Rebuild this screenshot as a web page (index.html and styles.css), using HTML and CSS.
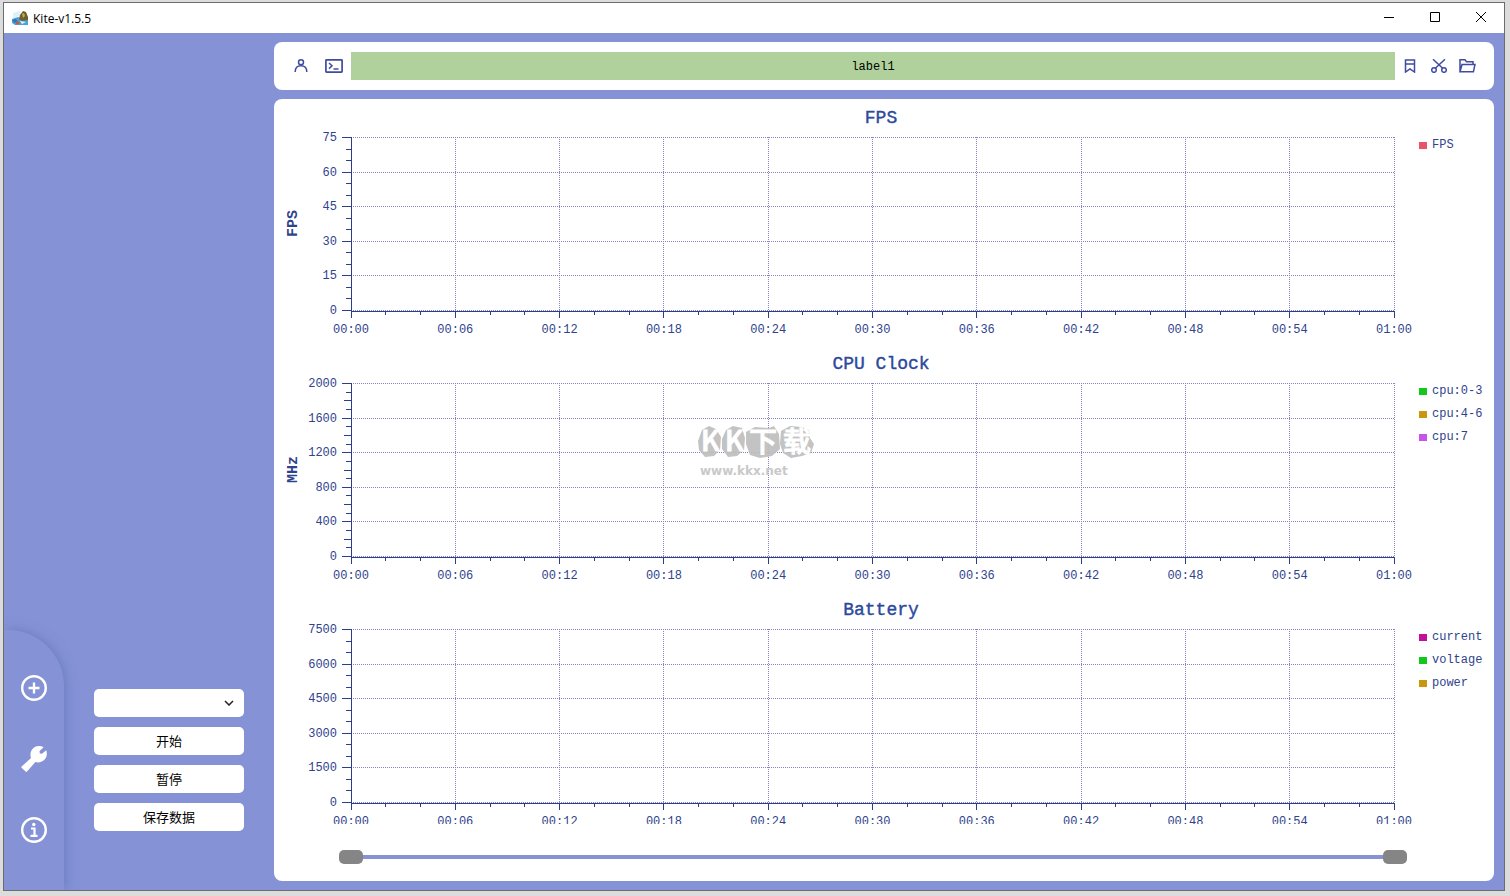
FILE: index.html
```html
<!DOCTYPE html>
<html lang="zh-CN">
<head>
<meta charset="utf-8">
<title>Kite-v1.5.5</title>
<link rel="stylesheet" href="styles.css">
</head>
<body>
<div class="window">
  <header class="titlebar">
    <svg class="app-icon" width="17" height="16" viewBox="0 0 17 16" aria-hidden="true">
      <path d="M1 3l7-2 1 4-6 3H1z" fill="#dff1f8"/>
      <path d="M0 9l6-2 5 2 5-1v7H3l-3-2z" fill="#4aa3d8"/>
      <path d="M7 9l1-4 3-4 3 1 2 5v3l-6 1z" fill="#6d6030"/>
      <path d="M10 4l2-1 1 3-2 2z" fill="#c9a64a"/>
      <path d="M0 10l4-1 2 3-3 1z" fill="#2677b8"/>
      <path d="M3 12l3-1 2 2-3 2z" fill="#c8584a"/>
      <path d="M8 11l6 1-4 2z" fill="#e8f6fb"/>
    </svg>
    <h1 class="app-title">Kite-v1.5.5</h1>
    <div class="window-buttons">
      <button class="window-button" type="button" aria-label="Minimize"><svg width="12" height="12" viewBox="0 0 12 12"><path d="M1 5.500h10"/></svg></button>
      <button class="window-button" type="button" aria-label="Maximize"><svg width="12" height="12" viewBox="0 0 12 12"><path d="M1.500 .5h9v9h-9z"/></svg></button>
      <button class="window-button" type="button" aria-label="Close"><svg width="12" height="12" viewBox="0 0 12 12"><path d="M1 0l10 10M11 0L1 10"/></svg></button>
    </div>
  </header>

  <div class="workspace">
    <aside class="side">
      <nav class="rail">
        <button class="rail-button" type="button" aria-label="Add">
          <svg width="26" height="26" viewBox="0 0 26 26" fill="none" stroke="#fff" stroke-width="2.400"><circle cx="13" cy="13" r="11.800"/><path d="M13 7.500v11M7.500 13h11"/></svg>
        </button>
        <button class="rail-button" type="button" aria-label="Tools">
          <svg width="26" height="26" viewBox="0 0 26 26"><path d="M4.600 25.600L.6 21.800q-.6-.6 0-1.200L10 12C8.600 8 9.800 3.600 13.400 1.300c2.600-1.600 6.400-1.600 9.200-.1L18.600 5l.2 2.600 2.200.2L25.200 4.200c1.200 3.200.7 6.800-1.600 9.400-2.200 2.600-6 3.400-9.200 2.400L6 25.600q-.7.6-1.400 0z" fill="#fff"/></svg>
        </button>
        <button class="rail-button" type="button" aria-label="About">
          <svg width="26" height="26" viewBox="0 0 26 26" fill="none" stroke="#fff"><circle cx="13" cy="13" r="11.800" stroke-width="2.400"/><circle cx="12.800" cy="7.500" r="1.700" fill="#fff" stroke="none"/><path d="M10 11.500h3.500V18M9.500 18.800h7" stroke-width="2.200"/></svg>
        </button>
      </nav>
      <div class="controls">
        <div class="picker">
          <select class="control" aria-label="Device"><option></option></select>
          <svg class="picker-arrow" width="10" height="6" viewBox="0 0 10 6"><path d="M1 1l4 4 4-4" fill="none" stroke="#222" stroke-width="1.500"/></svg>
        </div>
        <button class="control" type="button">开始</button>
        <button class="control" type="button">暂停</button>
        <button class="control" type="button">保存数据</button>
      </div>
    </aside>

    <main class="content">
      <section class="card toolbar">
        <div class="tools tools-left">
          <button class="tool" type="button" aria-label="User"><svg width="14" height="14" viewBox="0 0 14 14"><circle cx="7" cy="3.300" r="2.500"/><path d="M1.200 13c0-3.900 2.400-6.200 5.800-6.200s5.800 2.300 5.800 6.200"/></svg></button>
          <button class="tool" type="button" aria-label="Terminal"><svg width="18" height="14" viewBox="0 0 18 14"><rect x=".9" y=".9" width="16.200" height="12.200" rx=".6" stroke-width="1.700"/><path d="M4 4l3 2.800L4 9.600M8.500 10h5"/></svg></button>
        </div>
        <output class="status">label1</output>
        <div class="tools tools-right">
          <button class="tool" type="button" aria-label="Bookmark"><svg width="12" height="14" viewBox="0 0 12 14"><path d="M1.500 1h9v12L6 9.800 1.500 13zM1.500 5h9"/></svg></button>
          <button class="tool" type="button" aria-label="Cut"><svg width="16" height="14" viewBox="0 0 16 14"><path d="M2 .3l9.700 9M14 .3l-9.700 9"/><circle cx="3" cy="11" r="2.300"/><circle cx="13" cy="11" r="2.300"/></svg></button>
          <button class="tool" type="button" aria-label="Open folder"><svg width="17" height="14" viewBox="0 0 17 14"><path d="M1 12.800V.8h5l1.500 2H14v2.700M1 12.800l2-7.300h13l-1.600 7.300z"/></svg></button>
        </div>
      </section>

      <section class="card board">
        <div class="charts" id="charts"></div>
        <div class="range">
          <input class="range-input" type="range" aria-label="Range start" min="0" max="60" value="0">
          <input class="range-input range-end" type="range" aria-label="Range end" min="0" max="60" value="60">
        </div>
      </section>
    </main>
  </div>

  <div class="watermark">
    <svg width="118" height="34" viewBox="0 0 118 34">
      <path d="M1 16L5 5l7-4 7 3 5 8-1 13-6 6-9 1-6-7zM25 14l4-9 7-4 9 2 3 10-1 12-7 6-9 1-6-8zM49 7l9-5 14 1 5-2 5 8 1 15-8 7-12 2-10-3-4-11zM84 6l9-5 12 1 7 3 1 8 4 6-3 9-9 3-11 2-8-5-3-9z" fill="#bdbdbd"/>
      <g class="watermark-logo"><text x="4" y="26">K</text><text x="28" y="26">K</text><text x="52" y="27">下</text><text x="86" y="27">载</text></g>
    </svg>
    <span class="watermark-url">www.kkx.net</span>
  </div>
</div>
<script src="charts.js"></script>
</body>
</html>
```

FILE: styles.css
```css
* {
  box-sizing: border-box;
}

body {
  margin: 0;
  padding: 2px 5px 5px 3px;
  min-height: 100vh;
  display: flex;
  background: #dcdcdc;
  font-family: "Liberation Mono", "Noto Sans CJK SC", monospace;
  font-size: 12px;
}

button {
  border: 0;
  padding: 0;
  background: none;
  font: inherit;
  color: inherit;
}

svg {
  display: block;
}

.window {
  position: relative;
  flex: 1;
  display: flex;
  flex-direction: column;
  border: 1px solid #6c6c70;
  background: #8592d6;
}

.titlebar {
  display: flex;
  align-items: center;
  height: 30px;
  padding-left: 8px;
  background: #fff;
}

.app-title {
  flex: 1;
  margin: 0 0 0 4px;
  font: 400 12px "Open Sans", sans-serif;
  color: #000;
}

.window-buttons {
  display: flex;
  align-self: stretch;
}

.window-button {
  display: grid;
  place-items: center;
  width: 46px;
  fill: none;
  stroke: #000;
}

.workspace {
  flex: 1;
  display: grid;
  grid-template-columns: 270px 1fr;
}

.side {
  display: flex;
  align-items: flex-end;
  gap: 30px;
  overflow: hidden;
}

.rail {
  display: flex;
  flex-direction: column;
  align-items: center;
  gap: 45px;
  width: 60px;
  padding: 45px 0 47px;
  border-top-right-radius: 56px;
  background: #8592d6;
  box-shadow: 2px 0 12px #6c7dc0;
}

.controls {
  display: flex;
  flex-direction: column;
  gap: 10px;
  width: 150px;
  padding-bottom: 59px;
}

.control {
  width: 100%;
  height: 28px;
  padding-bottom: 2px;
  border: 0;
  border-radius: 5px;
  background: #fff;
  color: #000;
  font-size: 13px;
  appearance: none;
}

.picker {
  position: relative;
  display: flex;
}

.picker-arrow {
  position: absolute;
  top: 11px;
  right: 10px;
  pointer-events: none;
}

.content {
  display: flex;
  flex-direction: column;
  gap: 9px;
  min-width: 0;
  padding: 9px 10px 9px 0;
}

.card {
  border-radius: 8px;
  background: #fff;
}

.toolbar {
  display: grid;
  grid-template-columns: 77px 1fr 99px;
  align-items: center;
  height: 48px;
}

.tools {
  display: flex;
}

.tools-left {
  padding-left: 10px;
}

.tool {
  display: grid;
  place-items: center;
  width: 29px;
  height: 28px;
  fill: none;
  stroke: #3f4ca0;
  stroke-width: 1.5;
}

.tools-left .tool {
  width: 33px;
}

.status {
  display: grid;
  place-items: center;
  height: 28px;
  padding-top: 2px;
  background: #b0d19b;
  color: #000;
}

.board {
  flex: 1;
  display: flex;
  flex-direction: column;
  min-height: 0;
}

.charts {
  flex: 1 1 0;
  min-height: 0;
  overflow: hidden;
  padding-right: 6px;
  color: #2f438c;
}

.chart {
  display: grid;
  grid-template-columns: 77px 1fr 94px;
  grid-template-rows: 38px 173px;
  height: 246px;
  margin: 0;
}

.chart-title {
  grid-column: 1 / -1;
  display: grid;
  place-items: center;
  font-size: 18px;
  color: #2b4a9c;
  -webkit-text-stroke: 0.4px #2b4a9c;
}

.axis-name {
  justify-self: start;
  align-self: center;
  margin-left: 11px;
  writing-mode: vertical-rl;
  rotate: 180deg;
  font-size: 15px;
  font-weight: 700;
}

.plot {
  width: 100%;
  height: 173px;
  overflow: visible;
  shape-rendering: crispEdges;
}

.plot text {
  fill: #2f438c;
}

.tick-x {
  text-anchor: middle;
}

.tick-y {
  text-anchor: end;
}

.grid-line {
  stroke: #8484c4;
  stroke-dasharray: 1 1;
}

.axis {
  stroke: #2c3d8c;
}

.legend {
  display: flex;
  flex-direction: column;
  gap: 7px;
  margin: 0;
  padding: 0 0 0 25px;
  list-style: none;
}

.legend-item {
  display: flex;
  align-items: center;
  gap: 5px;
  height: 16px;
  line-height: 16px;
}

.swatch {
  width: 8px;
  height: 7px;
}

.range {
  display: grid;
  align-items: center;
  height: 57px;
  padding: 9px 87px 0 65px;
}

.range-input {
  grid-area: 1 / 1;
  width: 100%;
  height: 14px;
  margin: 0;
  appearance: none;
  background: linear-gradient(#8592d6, #8592d6) center / calc(100% - 24px) 4px no-repeat;
}

.range-end {
  background: none;
  pointer-events: none;
}

.range-input::-webkit-slider-thumb {
  appearance: none;
  width: 24px;
  height: 14px;
  border-radius: 5px;
  background: #858585;
  pointer-events: auto;
}

.watermark {
  position: absolute;
  top: 50%;
  left: 50%;
  margin: -22px 0 0 -57px;
  pointer-events: none;
  opacity: 0.9;
}

.watermark-logo {
  font: 500 28px "Noto Sans CJK SC", sans-serif;
  fill: #fff;
  stroke: #fff;
}

.watermark-url {
  display: block;
  margin: 5px 0 0 3px;
  font: 700 12px "DejaVu Sans", sans-serif;
  color: #c4c4c4;
}
```

FILE: charts.js
```javascript
const PLOT_HEIGHT = 173;
const TIMES = ["00:00", "00:06", "00:12", "00:18", "00:24", "00:30", "00:36", "00:42", "00:48", "00:54", "01:00"];

const CHARTS = [
  { title: "FPS", axis: "FPS", values: [75, 60, 45, 30, 15, 0], minor: 3,
    legend: [["FPS", "#e9546b"]] },
  { title: "CPU Clock", axis: "MHz", values: [2000, 1600, 1200, 800, 400, 0], minor: 4,
    legend: [["cpu:0-3", "#12c81a"], ["cpu:4-6", "#c8960f"], ["cpu:7", "#c654e8"]] },
  { title: "Battery", axis: "", values: [7500, 6000, 4500, 3000, 1500, 0], minor: 3,
    legend: [["current", "#c0109c"], ["voltage", "#12c81a"], ["power", "#c8960f"]] }
];

function line(kind, x1, y1, x2, y2) {
  return `<line class="${kind}" x1="${x1}" y1="${y1}" x2="${x2}" y2="${y2}"/>`;
}

function plot(chart) {
  const parts = [];
  const rows = chart.values.length - 1;
  const bottom = PLOT_HEIGHT + 1;

  for (let i = 0; i <= rows * chart.minor; i++) {
    const y = Math.round(i * PLOT_HEIGHT / (rows * chart.minor)) + 0.5;
    const step = i % chart.minor;
    if (step === 0) {
      parts.push(line("grid-line", 0, y, "100%", y));
      parts.push(line("axis", -9, y, 0, y));
      parts.push(`<text class="tick-y" x="-14" y="${y + 3}">${chart.values[i / chart.minor]}</text>`);
    } else {
      parts.push(line("axis", step * 2 === chart.minor ? -7 : -5, y, 0, y));
    }
  }

  const columns = TIMES.length - 1;
  for (let i = 0; i <= columns * 3; i++) {
    const x = `${i * 100 / (columns * 3)}%`;
    if (i % 3 === 0) {
      parts.push(line("grid-line", x, 0, x, PLOT_HEIGHT));
      parts.push(line("axis", x, bottom, x, bottom + 7));
      parts.push(`<text class="tick-x" x="${x}" y="196">${TIMES[i / 3]}</text>`);
    } else {
      parts.push(line("axis", x, bottom, x, bottom + 4));
    }
  }

  parts.push(line("axis", 0, 0, 0, bottom));
  parts.push(line("axis", 0, bottom + 0.5, "100%", bottom + 0.5));
  return `<svg class="plot">${parts.join("")}</svg>`;
}

document.getElementById("charts").innerHTML = CHARTS.map(chart => `
  <figure class="chart">
    <figcaption class="chart-title">${chart.title}</figcaption>
    <div class="axis-name">${chart.axis}</div>
    ${plot(chart)}
    <ul class="legend">
      ${chart.legend.map(([name, color]) => `<li class="legend-item"><span class="swatch" style="background:${color}"></span>${name}</li>`).join("")}
    </ul>
  </figure>`).join("");
```
